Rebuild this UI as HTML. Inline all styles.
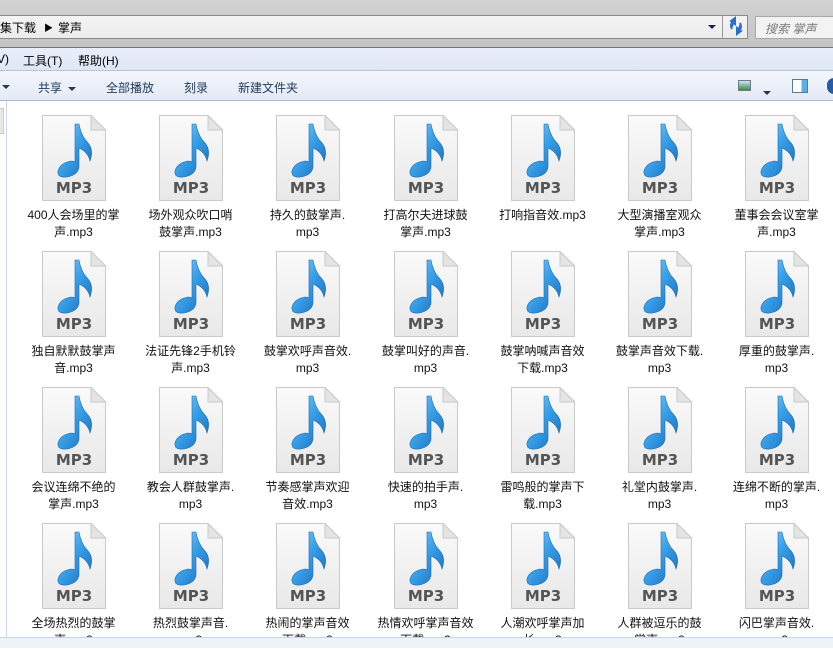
<!DOCTYPE html>
<html><head><meta charset="utf-8"><style>
*{margin:0;padding:0;box-sizing:border-box}
body{width:833px;height:648px;overflow:hidden;background:#fff;font-family:"Liberation Sans","Noto Sans CJK SC",sans-serif;font-size:12px;color:#000;position:relative}
.top{position:absolute;left:0;top:0;width:833px;height:47px;background:linear-gradient(#d2d2d2,#c4c4c4)}
.addr{position:absolute;left:0;top:15px;width:748px;height:24px;background:linear-gradient(#f4f4f4,#ececec);border:1px solid #8a8a8a;border-left:none}
.addr span{position:absolute;top:3px;font-size:12px}
.ref{position:absolute;left:722px;top:15px;width:26px;height:24px;border-left:1px solid #9a9a9a}
.search{position:absolute;left:755px;top:16px;width:80px;height:23px;background:#f3f3f3;border:1px solid #a9a9a9;color:#7a7a7a;font-style:italic;padding:3px 0 0 9px}
.menu{position:absolute;left:0;top:47px;width:833px;height:23px;background:linear-gradient(#e9eef9,#dfe6f5);border-top:1px solid #6d7380}
.menu span{position:absolute;top:4px}
.tool{position:absolute;left:0;top:70px;width:833px;height:31px;background:linear-gradient(#f3f6fc,#e4eaf6);border-top:1px solid #b9c4d6;border-bottom:1px solid #a9b9d0}
.tool span{position:absolute;top:8px;color:#1e395b}
.tri{display:inline-block;width:0;height:0;border-left:4px solid transparent;border-right:4px solid transparent;border-top:4px solid #1e395b;vertical-align:middle;margin-left:6px}
.lp{position:absolute;left:0;top:101px;width:7px;height:536px;border-right:1px solid #c9d8ec}
.status{position:absolute;left:0;top:637px;width:833px;height:11px;background:#eef2f9;border-top:1px solid #c8d4e6}
.c{position:absolute;width:117px;text-align:center}
.c svg{display:block;margin:0 auto}
.c p{line-height:17px;margin-top:6px;white-space:nowrap;color:#111}
</style></head><body>
<div class="top"></div>
<div class="addr"><span style="left:0">集下载</span><span style="left:44px;font-size:9px;top:5px">▶</span><span style="left:58px">掌声</span>
<span style="left:708px;top:9px;width:0;height:0;border-left:4px solid transparent;border-right:4px solid transparent;border-top:4px solid #1a1a5a"></span></div>
<div class="ref"><svg width="26" height="22"><path d="M8 6 L12 3 L12 9Z M12 6 Q6 8 9 14" fill="#2a6fd0" stroke="#2a6fd0" stroke-width="2"/><path d="M18 16 L14 19 L14 13Z M14 16 Q20 14 17 8" fill="#2a6fd0" stroke="#2a6fd0" stroke-width="2"/></svg></div>
<div class="search">搜索 掌声</div>
<div class="menu"><span style="left:-3px">V)</span><span style="left:23px">工具(T)</span><span style="left:78px">帮助(H)</span></div>
<div class="tool"><span style="left:-4px"><i class="tri"></i></span><span style="left:38px">共享<i class="tri"></i></span><span style="left:106px">全部播放</span><span style="left:184px">刻录</span><span style="left:238px">新建文件夹</span>
<span style="left:738px;top:9px;width:13px;height:11px;border:1px solid #6a7a8a;background:linear-gradient(#cfe3f5,#3c8a4a)"></span>
<span style="left:763px;top:14px"><i class="tri" style="margin:0"></i></span>
<span style="left:792px;top:8px;width:16px;height:14px;border:1px solid #5a7a9a;background:linear-gradient(90deg,#fff 60%,#5ab0e0 60%)"></span>
<span style="left:827px;top:7px;width:14px;height:16px;border-radius:8px;background:#2a5aa0"></span></div>
<div class="lp"><div style="position:absolute;left:0;top:7px;width:4px;height:26px;background:#e6e6e6;border:1px solid #ccc;border-left:none"></div></div>
<svg width="0" height="0" style="position:absolute"><defs>
<linearGradient id="pg" x1="0" y1="0" x2="0" y2="1"><stop offset="0" stop-color="#fafafa"/><stop offset="1" stop-color="#e8e8e8"/></linearGradient>
<linearGradient id="nb" x1="0" y1="0" x2="1" y2="1"><stop offset="0" stop-color="#9ad6fa"/><stop offset="0.45" stop-color="#3aa2ea"/><stop offset="1" stop-color="#1468b8"/></linearGradient>
<g id="ic"><path d="M1.5 .5H50L64.5 15V85.5H1.5Z" fill="url(#pg)" stroke="#c9c9c9"/><path d="M50 .5V15H64.5Z" fill="#e4e4e4" stroke="#c9c9c9"/>
<path d="M34 9 L38 9 Q40 21 47 28 Q53 35 49 46 Q47 37 38 33 L38 52 Q37 60 26 62 Q16 63 17 56 Q19 48 30 46 Q33 46 34 47Z" fill="url(#nb)" stroke="#1a6cb5" stroke-width=".6"/></g>
</defs></svg>
<div class="c" style="left:15px;top:115px"><svg width="66" height="86"><use href="#ic"/><text x="33" y="78" text-anchor="middle" font-family="DejaVu Sans" font-weight="bold" font-size="15" fill="#555">MP3</text></svg><p>400人会场里的掌<br>声.mp3</p></div>
<div class="c" style="left:132px;top:115px"><svg width="66" height="86"><use href="#ic"/><text x="33" y="78" text-anchor="middle" font-family="DejaVu Sans" font-weight="bold" font-size="15" fill="#555">MP3</text></svg><p>场外观众吹口哨<br>鼓掌声.mp3</p></div>
<div class="c" style="left:249px;top:115px"><svg width="66" height="86"><use href="#ic"/><text x="33" y="78" text-anchor="middle" font-family="DejaVu Sans" font-weight="bold" font-size="15" fill="#555">MP3</text></svg><p>持久的鼓掌声.<br>mp3</p></div>
<div class="c" style="left:367px;top:115px"><svg width="66" height="86"><use href="#ic"/><text x="33" y="78" text-anchor="middle" font-family="DejaVu Sans" font-weight="bold" font-size="15" fill="#555">MP3</text></svg><p>打高尔夫进球鼓<br>掌声.mp3</p></div>
<div class="c" style="left:484px;top:115px"><svg width="66" height="86"><use href="#ic"/><text x="33" y="78" text-anchor="middle" font-family="DejaVu Sans" font-weight="bold" font-size="15" fill="#555">MP3</text></svg><p>打响指音效.mp3</p></div>
<div class="c" style="left:601px;top:115px"><svg width="66" height="86"><use href="#ic"/><text x="33" y="78" text-anchor="middle" font-family="DejaVu Sans" font-weight="bold" font-size="15" fill="#555">MP3</text></svg><p>大型演播室观众<br>掌声.mp3</p></div>
<div class="c" style="left:718px;top:115px"><svg width="66" height="86"><use href="#ic"/><text x="33" y="78" text-anchor="middle" font-family="DejaVu Sans" font-weight="bold" font-size="15" fill="#555">MP3</text></svg><p>董事会会议室掌<br>声.mp3</p></div>

<div class="c" style="left:15px;top:251px"><svg width="66" height="86"><use href="#ic"/><text x="33" y="78" text-anchor="middle" font-family="DejaVu Sans" font-weight="bold" font-size="15" fill="#555">MP3</text></svg><p>独自默默鼓掌声<br>音.mp3</p></div>
<div class="c" style="left:132px;top:251px"><svg width="66" height="86"><use href="#ic"/><text x="33" y="78" text-anchor="middle" font-family="DejaVu Sans" font-weight="bold" font-size="15" fill="#555">MP3</text></svg><p>法证先锋2手机铃<br>声.mp3</p></div>
<div class="c" style="left:249px;top:251px"><svg width="66" height="86"><use href="#ic"/><text x="33" y="78" text-anchor="middle" font-family="DejaVu Sans" font-weight="bold" font-size="15" fill="#555">MP3</text></svg><p>鼓掌欢呼声音效.<br>mp3</p></div>
<div class="c" style="left:367px;top:251px"><svg width="66" height="86"><use href="#ic"/><text x="33" y="78" text-anchor="middle" font-family="DejaVu Sans" font-weight="bold" font-size="15" fill="#555">MP3</text></svg><p>鼓掌叫好的声音.<br>mp3</p></div>
<div class="c" style="left:484px;top:251px"><svg width="66" height="86"><use href="#ic"/><text x="33" y="78" text-anchor="middle" font-family="DejaVu Sans" font-weight="bold" font-size="15" fill="#555">MP3</text></svg><p>鼓掌呐喊声音效<br>下载.mp3</p></div>
<div class="c" style="left:601px;top:251px"><svg width="66" height="86"><use href="#ic"/><text x="33" y="78" text-anchor="middle" font-family="DejaVu Sans" font-weight="bold" font-size="15" fill="#555">MP3</text></svg><p>鼓掌声音效下载.<br>mp3</p></div>
<div class="c" style="left:718px;top:251px"><svg width="66" height="86"><use href="#ic"/><text x="33" y="78" text-anchor="middle" font-family="DejaVu Sans" font-weight="bold" font-size="15" fill="#555">MP3</text></svg><p>厚重的鼓掌声.<br>mp3</p></div>

<div class="c" style="left:15px;top:387px"><svg width="66" height="86"><use href="#ic"/><text x="33" y="78" text-anchor="middle" font-family="DejaVu Sans" font-weight="bold" font-size="15" fill="#555">MP3</text></svg><p>会议连绵不绝的<br>掌声.mp3</p></div>
<div class="c" style="left:132px;top:387px"><svg width="66" height="86"><use href="#ic"/><text x="33" y="78" text-anchor="middle" font-family="DejaVu Sans" font-weight="bold" font-size="15" fill="#555">MP3</text></svg><p>教会人群鼓掌声.<br>mp3</p></div>
<div class="c" style="left:249px;top:387px"><svg width="66" height="86"><use href="#ic"/><text x="33" y="78" text-anchor="middle" font-family="DejaVu Sans" font-weight="bold" font-size="15" fill="#555">MP3</text></svg><p>节奏感掌声欢迎<br>音效.mp3</p></div>
<div class="c" style="left:367px;top:387px"><svg width="66" height="86"><use href="#ic"/><text x="33" y="78" text-anchor="middle" font-family="DejaVu Sans" font-weight="bold" font-size="15" fill="#555">MP3</text></svg><p>快速的拍手声.<br>mp3</p></div>
<div class="c" style="left:484px;top:387px"><svg width="66" height="86"><use href="#ic"/><text x="33" y="78" text-anchor="middle" font-family="DejaVu Sans" font-weight="bold" font-size="15" fill="#555">MP3</text></svg><p>雷鸣般的掌声下<br>载.mp3</p></div>
<div class="c" style="left:601px;top:387px"><svg width="66" height="86"><use href="#ic"/><text x="33" y="78" text-anchor="middle" font-family="DejaVu Sans" font-weight="bold" font-size="15" fill="#555">MP3</text></svg><p>礼堂内鼓掌声.<br>mp3</p></div>
<div class="c" style="left:718px;top:387px"><svg width="66" height="86"><use href="#ic"/><text x="33" y="78" text-anchor="middle" font-family="DejaVu Sans" font-weight="bold" font-size="15" fill="#555">MP3</text></svg><p>连绵不断的掌声.<br>mp3</p></div>

<div class="c" style="left:15px;top:523px"><svg width="66" height="86"><use href="#ic"/><text x="33" y="78" text-anchor="middle" font-family="DejaVu Sans" font-weight="bold" font-size="15" fill="#555">MP3</text></svg><p>全场热烈的鼓掌<br>声.mp3</p></div>
<div class="c" style="left:132px;top:523px"><svg width="66" height="86"><use href="#ic"/><text x="33" y="78" text-anchor="middle" font-family="DejaVu Sans" font-weight="bold" font-size="15" fill="#555">MP3</text></svg><p>热烈鼓掌声音.<br>mp3</p></div>
<div class="c" style="left:249px;top:523px"><svg width="66" height="86"><use href="#ic"/><text x="33" y="78" text-anchor="middle" font-family="DejaVu Sans" font-weight="bold" font-size="15" fill="#555">MP3</text></svg><p>热闹的掌声音效<br>下载.mp3</p></div>
<div class="c" style="left:367px;top:523px"><svg width="66" height="86"><use href="#ic"/><text x="33" y="78" text-anchor="middle" font-family="DejaVu Sans" font-weight="bold" font-size="15" fill="#555">MP3</text></svg><p>热情欢呼掌声音效<br>下载.mp3</p></div>
<div class="c" style="left:484px;top:523px"><svg width="66" height="86"><use href="#ic"/><text x="33" y="78" text-anchor="middle" font-family="DejaVu Sans" font-weight="bold" font-size="15" fill="#555">MP3</text></svg><p>人潮欢呼掌声加<br>长.mp3</p></div>
<div class="c" style="left:601px;top:523px"><svg width="66" height="86"><use href="#ic"/><text x="33" y="78" text-anchor="middle" font-family="DejaVu Sans" font-weight="bold" font-size="15" fill="#555">MP3</text></svg><p>人群被逗乐的鼓<br>掌声.mp3</p></div>
<div class="c" style="left:718px;top:523px"><svg width="66" height="86"><use href="#ic"/><text x="33" y="78" text-anchor="middle" font-family="DejaVu Sans" font-weight="bold" font-size="15" fill="#555">MP3</text></svg><p>闪巴掌声音效.<br>mp3</p></div>
<div class="status"></div>
</body></html>
